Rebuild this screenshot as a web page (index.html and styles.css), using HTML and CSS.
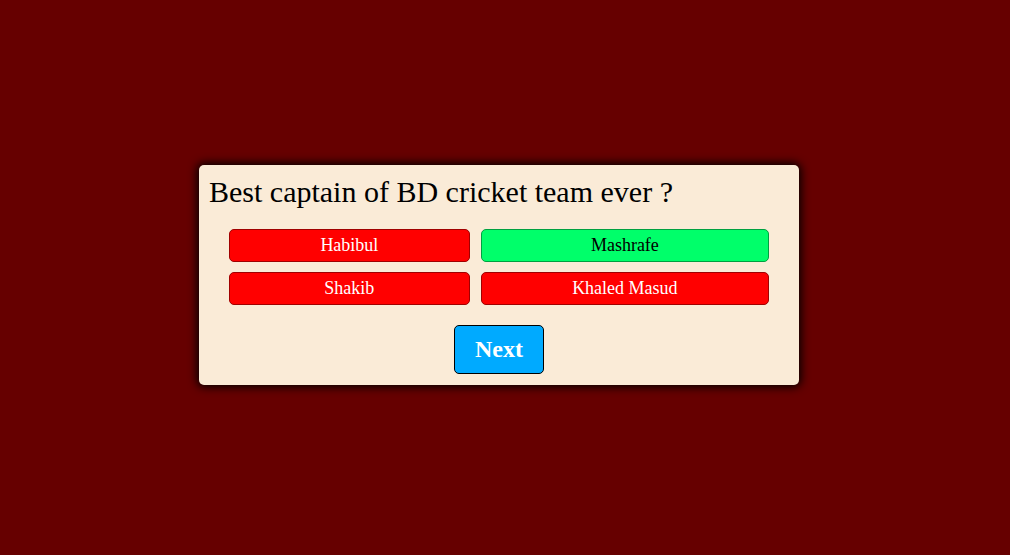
FILE: index.html
```html
<!DOCTYPE html>
<html>
<head>
<meta charset="utf-8">
<link rel="stylesheet" href="styles.css">
</head>
<body>
<div class="quiz">
  <h2 class="question">Best captain of BD cricket team ever ?</h2>
  <div class="answers">
    <button class="btn wrong">Habibul</button>
    <button class="btn correct">Mashrafe</button>
    <button class="btn wrong">Shakib</button>
    <button class="btn wrong">Khaled Masud</button>
  </div>
  <div class="controls">
    <button class="next">Next</button>
  </div>
</div>
</body>
</html>
```
FILE: styles.css
```css
html, body {
  margin: 0;
  height: 100%;
}
body {
  background: #660000;
  font-family: "Liberation Serif", "Times New Roman", serif;
  display: flex;
  justify-content: center;
  align-items: center;
  padding-right: 12px;
  padding-bottom: 6px;
  box-sizing: border-box;
}
.quiz {
  width: 600px;
  box-sizing: border-box;
  background: #faebd7;
  border-radius: 5px;
  box-shadow: 0 0 10px 2px #000;
  padding: 10px 10px 11px;
}
.question {
  margin: 0 0 20px;
  font-size: 30px;
  font-weight: normal;
  line-height: 34px;
  color: #000;
}
.answers {
  display: grid;
  grid-template-columns: auto auto;
  gap: 10px 11px;
  margin: 0 20px;
}
.btn {
  height: 33px;
  font-family: "Liberation Serif", "Times New Roman", serif;
  font-size: 18px;
  border-radius: 5px;
  padding: 0 10px;
}
.wrong {
  background: #ff0000;
  color: #fff;
  border: 1px solid #a00000;
}
.correct {
  background: #00ff6a;
  color: #000;
  border: 1px solid #00a040;
}
.controls {
  display: flex;
  justify-content: center;
  margin-top: 20px;
}
.next {
  font-family: "Liberation Serif", "Times New Roman", serif;
  font-size: 24px;
  font-weight: bold;
  line-height: 29px;
  padding: 9px 20px;
  color: #fff;
  background: #00aaff;
  border: 1px solid #000;
  border-radius: 5px;
}
```
